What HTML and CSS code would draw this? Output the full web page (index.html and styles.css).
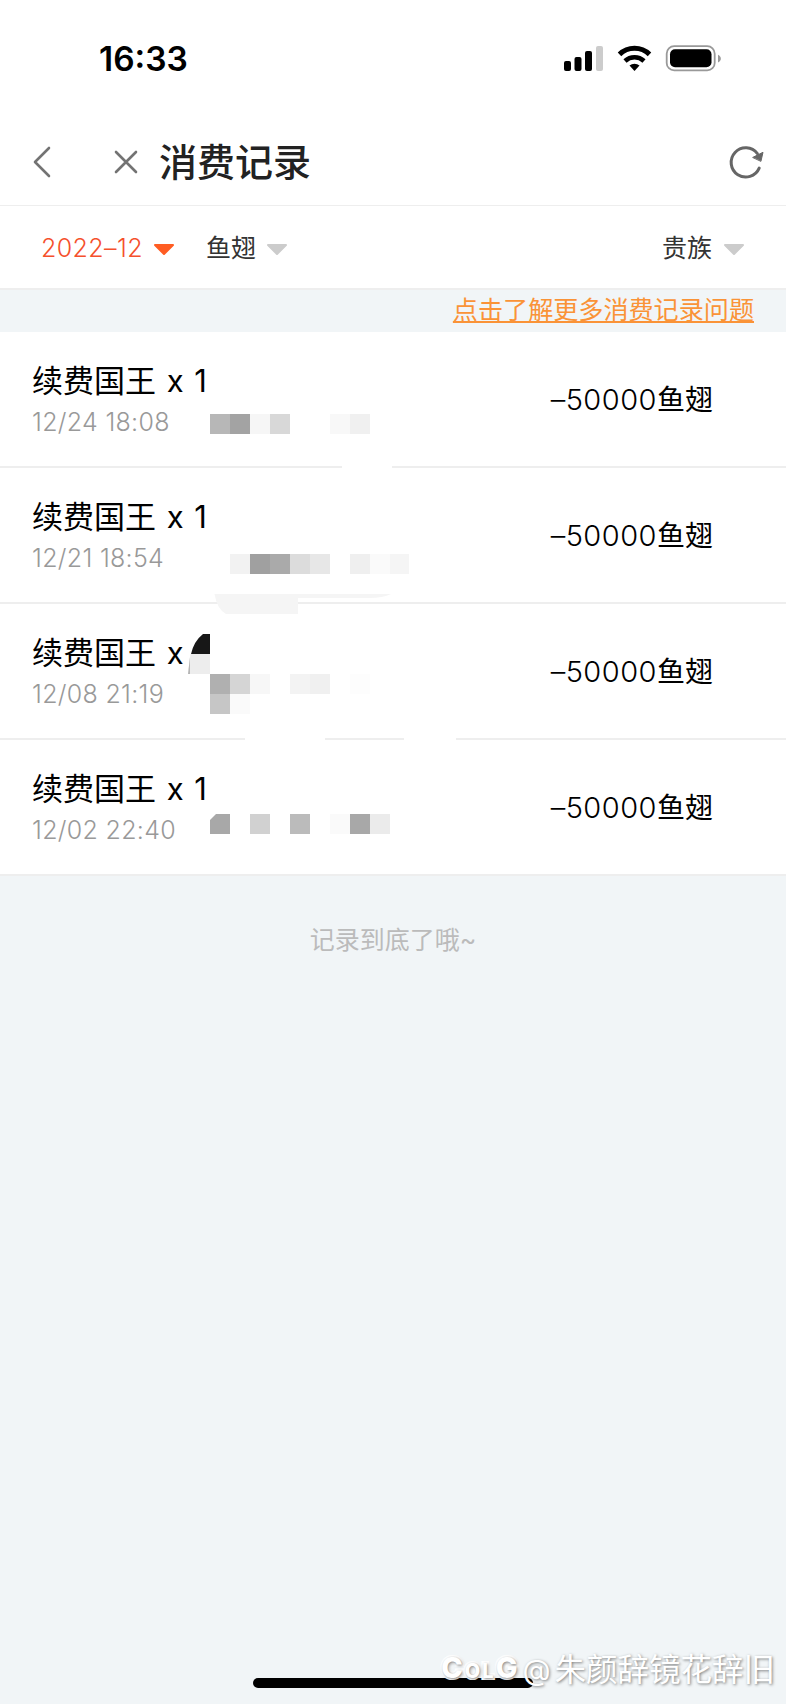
FILE: index.html
```html
<!DOCTYPE html>
<html lang="zh-CN">
<head>
    <meta charset="UTF-8">
    <meta name="viewport" content="width=device-width, initial-scale=1.0">
    <title>消费记录</title>
    <link rel="stylesheet" href="styles.css">
</head>
<body>
    <div class="page">
        <div class="status-bar">
            <span class="time">16:33</span>
            <svg class="status-icons" width="160" height="30" viewBox="0 0 160 30">
                <rect x="1" y="18" width="7" height="10" rx="2"/>
                <rect x="11.5" y="14" width="7" height="14" rx="2"/>
                <rect x="22" y="8" width="7" height="20" rx="2"/>
                <rect x="33" y="3" width="7" height="25" rx="2" fill="#ccc"/>
                <g fill="none" stroke="#000" stroke-width="5">
                    <path d="M56.5 11.4a21.5 21.5 0 0 1 30 0"/>
                    <path d="M62 18a14 14 0 0 1 19 0" stroke-width="4.6"/>
                </g>
                <path d="M66.5 22.6a7.5 7.5 0 0 1 10 0L71.5 28z"/>
                <rect x="103.7" y="3.2" width="48" height="24.2" rx="7.5" fill="#fff" stroke="#999" stroke-width="1.8"/>
                <rect x="107" y="6.3" width="41.5" height="18" rx="5"/>
                <path d="M155 11.8c3.8 1.5 3.8 6.3 0 7.6z" fill="#999"/>
            </svg>
        </div>

        <div class="nav">
            <svg width="20" height="34" viewBox="0 0 20 34"><path d="M17 3L3 17l14 14"/></svg>
            <svg class="close" width="26" height="26" viewBox="0 0 26 26"><path d="M3 3l20 20M23 3L3 23"/></svg>
            <h1>消费记录</h1>
            <svg class="refresh" width="40" height="40" viewBox="0 0 40 40">
                <path d="M34.2 26.1A14.6 14.6 0 1 1 32.4 11.6"/>
                <path class="arrow" d="M28 15.3l10-5-2 8.700z"/>
            </svg>
        </div>

        <div class="filters">
            <div class="filter active">
                <span>2022–12</span>
                <svg width="22" height="13" viewBox="0 0 22 13"><path d="M2 2h18l-9 9z"/></svg>
            </div>
            <div class="filter">
                <span>鱼翅</span>
                <svg width="22" height="13" viewBox="0 0 22 13"><path d="M2 2h18l-9 9z"/></svg>
            </div>
            <div class="filter right">
                <span>贵族</span>
                <svg width="22" height="13" viewBox="0 0 22 13"><path d="M2 2h18l-9 9z"/></svg>
            </div>
        </div>

        <div class="notice"><a href="#">点击了解更多消费记录问题</a></div>

        <div class="list">
            <div class="row">
                <div class="info">
                    <div class="name">续费国王 x 1</div>
                    <div class="date">12/24 18:08</div>
                </div>
                <div class="amount"><span class="num">–50000</span>鱼翅</div>
                <svg class="mosaic" width="786" height="136" viewBox="0 0 786 136">
                    <rect x="210" y="82" width="20" height="20" fill="#b7b7b7"/>
                    <rect x="230" y="82" width="20" height="20" fill="#a3a3a3"/>
                    <rect x="250" y="82" width="20" height="20" fill="#f6f6f6"/>
                    <rect x="270" y="82" width="20" height="20" fill="#d8d8d8"/>
                    <rect x="330" y="82" width="20" height="20" fill="#f8f8f8"/>
                    <rect x="350" y="82" width="20" height="20" fill="#f0f0f0"/>
                    <rect x="342" y="133" width="50" height="3" fill="#fff"/>
                </svg>
            </div>
            <div class="row">
                <div class="info">
                    <div class="name">续费国王 x 1</div>
                    <div class="date">12/21 18:54</div>
                </div>
                <div class="amount"><span class="num">–50000</span>鱼翅</div>
                <svg class="mosaic" width="786" height="136" viewBox="0 0 786 136">
                    <rect x="230" y="86" width="20" height="20" fill="#f2f2f2"/>
                    <rect x="250" y="86" width="20" height="20" fill="#a0a0a0"/>
                    <rect x="270" y="86" width="20" height="20" fill="#aaa"/>
                    <rect x="290" y="86" width="20" height="20" fill="#dcdcdc"/>
                    <rect x="310" y="86" width="20" height="20" fill="#e7e7e7"/>
                    <rect x="350" y="86" width="20" height="20" fill="#efefef"/>
                    <rect x="370" y="86" width="20" height="20" fill="#fafafa"/>
                    <rect x="390" y="86" width="19" height="20" fill="#f5f5f5"/>
                    <path d="M214.500 126H391q-8 4-22 4H298v16H226q-9-5-11.500-20z" fill="#f5f5f5"/>
                </svg>
            </div>
            <div class="row">
                <div class="info">
                    <div class="name">续费国王 x</div>
                    <div class="date">12/08 21:19</div>
                </div>
                <div class="amount"><span class="num">–50000</span>鱼翅</div>
                <svg class="mosaic" width="786" height="136" viewBox="0 0 786 136">
                    <path d="M210 30h-7q-9 7-12 20h19z" fill="#171717"/>
                    <path d="M190.500 50H210v20h-22z" fill="#ededed"/>
                    <path d="M190 53v17h-2z" fill="#b5b5b5"/>
                    <rect x="210" y="70" width="20" height="20" fill="#b0b0b0"/>
                    <rect x="230" y="70" width="20" height="20" fill="#d5d5d5"/>
                    <rect x="250" y="70" width="20" height="20" fill="#f7f7f7"/>
                    <rect x="290" y="70" width="20" height="20" fill="#f3f3f3"/>
                    <rect x="310" y="70" width="20" height="20" fill="#f0f0f0"/>
                    <rect x="350" y="70" width="20" height="20" fill="#fdfdfd"/>
                    <rect x="210" y="90" width="20" height="20" fill="#c6c6c6"/>
                    <rect x="230" y="90" width="20" height="20" fill="#fafafa"/>
                    <rect x="245" y="133" width="80" height="4" fill="#fff"/>
                    <rect x="404" y="133" width="52" height="4" fill="#fff"/>
                </svg>
            </div>
            <div class="row">
                <div class="info">
                    <div class="name">续费国王 x 1</div>
                    <div class="date">12/02 22:40</div>
                </div>
                <div class="amount"><span class="num">–50000</span>鱼翅</div>
                <svg class="mosaic" width="786" height="136" viewBox="0 0 786 136">
                    <path d="M216 74h14v20h-20V80z" fill="#a8a8a8"/>
                    <rect x="250" y="74" width="20" height="20" fill="#d1d1d1"/>
                    <rect x="290" y="74" width="20" height="20" fill="#bbb"/>
                    <rect x="330" y="74" width="20" height="20" fill="#fafafa"/>
                    <rect x="350" y="74" width="20" height="20" fill="#a8a8a8"/>
                    <rect x="370" y="74" width="20" height="20" fill="#ebebeb"/>
                </svg>
            </div>
        </div>

        <div class="end">记录到底了哦~</div>

        <div class="home-indicator"></div>
        <div class="watermark">
            <span class="logo">C<small>OL</small>G</span>
            <span class="at">@</span>
            <span class="user">朱颜辞镜花辞旧</span>
        </div>
    </div>
</body>
</html>
```

FILE: styles.css
```css
* {
    box-sizing: border-box;
}

body {
    font-family: Inter, 'Noto Sans CJK SC', sans-serif;
    margin: 0;
    background: #f1f5f7;
    color: #000;
}

.page {
    position: relative;
    width: 786px;
    height: 1704px;
    overflow: hidden;
}

.status-bar {
    display: flex;
    justify-content: space-between;
    align-items: center;
    height: 118px;
    padding: 0 63px 0 99px;
    background: #fff;
}

.time {
    font-size: 33.5px;
    font-weight: 600;
}

.status-icons {
    margin-top: -2px;
}

.nav {
    display: flex;
    align-items: center;
    height: 88px;
    padding: 0 21px 0 32px;
    background: #fff;
    border-bottom: 1px solid #eee;
}

.nav svg {
    fill: none;
    stroke: #737373;
    stroke-width: 2.6;
    stroke-linecap: round;
    stroke-linejoin: round;
}

.nav .close {
    margin-left: 61px;
}

.nav h1 {
    margin: 0 0 0 20px;
    font-size: 38px;
    font-weight: 500;
    line-height: 56px;
    color: #222;
}

.nav .refresh {
    margin-left: auto;
    stroke: #666;
    stroke-width: 3;
}

.nav .refresh .arrow {
    fill: #666;
    stroke-width: 1;
}

.filters {
    display: flex;
    align-items: center;
    height: 84px;
    padding: 1px 41px 0 41px;
    background: #fff;
    border-bottom: 2px solid #eee;
    font-size: 25px;
    line-height: 36px;
}

.filter {
    display: flex;
    align-items: center;
    gap: 10px;
    margin-right: 32px;
    color: #333;
}

.filter svg {
    margin-top: 4px;
    fill: #ccc;
    stroke: #ccc;
    stroke-width: 2;
    stroke-linejoin: round;
}

.filter.active {
    margin-right: 31px;
    font-weight: 300;
    letter-spacing: 0.4px;
    color: #f5502c;
}

.filter.active svg {
    fill: #ff5d23;
    stroke: #ff5d23;
}

.filter.right {
    gap: 11px;
    margin: 0 0 0 auto;
}

.notice {
    height: 42px;
    padding-right: 32px;
    text-align: right;
    font-size: 25.1px;
    line-height: 40px;
}

.notice a {
    color: #fa9337;
    text-decoration-thickness: 2px;
    text-underline-offset: 2px;
}

.row {
    position: relative;
    display: flex;
    align-items: center;
    justify-content: space-between;
    height: 136px;
    padding: 2px 73px 0 32px;
    background: #fff;
    border-bottom: 2px solid #eee;
}

.name {
    font-size: 31px;
    line-height: 44px;
    word-spacing: 2px;
}

.date {
    font-size: 25px;
    font-weight: 300;
    line-height: 38px;
    letter-spacing: 0.3px;
    color: #999;
}

.amount {
    font-size: 28px;
    line-height: 40px;
}

.num {
    font-size: 29px;
    font-weight: 350;
    letter-spacing: 0.5px;
}

/* blurred-out nicknames on top of each record */
.mosaic {
    position: absolute;
    top: 0;
    left: 0;
    z-index: 1;
    overflow: visible;
}

.end {
    margin-top: 46px;
    text-align: center;
    font-size: 25px;
    line-height: 36px;
    color: #bbb;
}

.home-indicator {
    position: absolute;
    left: 253px;
    bottom: 16px;
    width: 280px;
    height: 10px;
    border-radius: 5px;
    background: #000;
}

.watermark {
    position: absolute;
    right: 11px;
    bottom: 10px;
    display: flex;
    align-items: center;
    color: #fff;
    line-height: 46px;
    text-shadow: 1px 1px 3px rgba(0, 0, 0, 0.5);
}

.logo {
    font-size: 29px;
    font-weight: 800;
    letter-spacing: 2px;
    -webkit-text-stroke: 4px #fff;
    paint-order: stroke;
    stroke-linejoin: round;
}

.logo small {
    font-size: 20px;
}

.at {
    margin-left: 3px;
    font-size: 29px;
}

.user {
    margin-left: 4px;
    font-size: 31.5px;
}
```
